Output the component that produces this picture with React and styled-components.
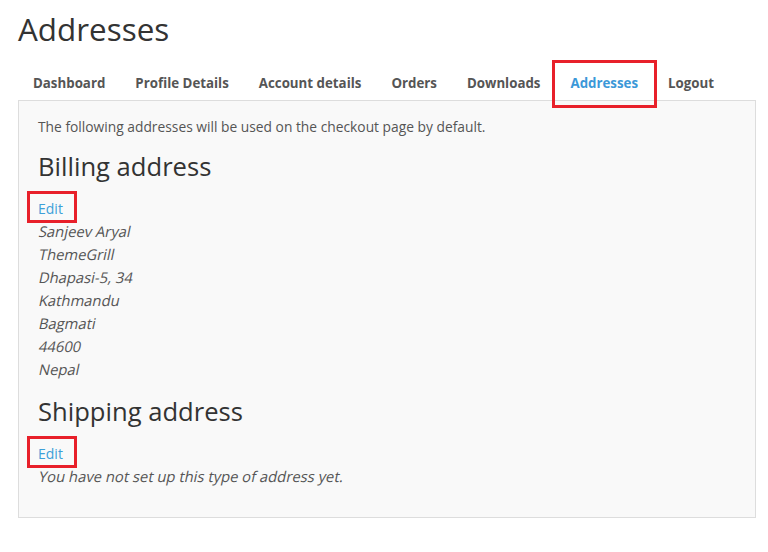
import React from 'react'
import styled, { createGlobalStyle } from 'styled-components';

const GlobalStyle = createGlobalStyle`
body{
    margin: 0;
    background: #fff;
    font-family: "Open Sans", "Liberation Sans", sans-serif;
    color: #555;
}
`;

const tabs = ['Dashboard', 'Profile Details', 'Account details', 'Orders', 'Downloads', 'Addresses', 'Logout'];
const billing = ['Sanjeev Aryal', 'ThemeGrill', 'Dhapasi-5, 34', 'Kathmandu', 'Bagmati', '44600', 'Nepal'];

const App = () => {
    return (
        <Page>
            <GlobalStyle/>
            <Title>Addresses</Title>
            <Tabs>
                {tabs.map(t => (
                    <Tab key={t} $active={t === 'Addresses'}>{t}</Tab>
                ))}
            </Tabs>
            <Panel>
                <Intro>The following addresses will be used on the checkout page by default.</Intro>
                <Heading>Billing address</Heading>
                <EditLink>Edit</EditLink>
                <Address>
                    {billing.map(line => <Line key={line}>{line}</Line>)}
                </Address>
                <Heading>Shipping address</Heading>
                <EditLink>Edit</EditLink>
                <Address>
                    <Line>You have not set up this type of address yet.</Line>
                </Address>
            </Panel>
        </Page>
    )
}

export default App;

const Page = styled.div`
width: 768px;
height: 552px;
padding: 0 12px 0 18px;
box-sizing: border-box;
`;

const Title = styled.h1`
margin: 0;
padding-top: 7px;
font-size: 31.4px;
font-weight: 400;
line-height: 44px;
color: #333;
`;

const Tabs = styled.div`
display: flex;
margin-top: 12px;
position: relative;
z-index: 1;
`;

const Tab = styled.div`
position: relative;
padding: 0 15px;
height: 42px;
line-height: 40px;
font-size: 13.3px;
font-weight: 700;
color: ${p => p.$active ? '#3b98d8' : '#555'};
margin-bottom: -5px;

&::after{
    content: "";
    display: ${p => p.$active ? 'block' : 'none'};
    position: absolute;
    top: -3px;
    bottom: -3px;
    left: -3px;
    right: -4px;
    border: 3px solid #e8202a;
}
`;

const Panel = styled.div`
border: 1px solid #ddd;
background: #f9f9f9;
padding: 14px 19px 31px;
height: 418px;
box-sizing: border-box;
`;

const Intro = styled.p`
margin: 0;
font-size: 13.8px;
line-height: 24px;
`;

const Heading = styled.h2`
margin: 0;
padding: 12px 0 11px;
font-size: 25.6px;
font-weight: 400;
line-height: 32px;
color: #333;
`;

const EditLink = styled.a`
display: inline-block;
margin: -3px 0 -3px -11px;
padding: 5px 14px 1px 11px;
font-size: 14px;
line-height: 26px;
color: #3d9fd8;
outline: 3px solid #e8202a;
outline-offset: -3px;
`;

const Address = styled.address`
display: flex;
flex-direction: column;
align-items: flex-start;
font-size: 14.8px;
line-height: 23px;
font-style: normal;
color: #555;
margin-bottom: 3px;
`;

const Line = styled.span`
display: inline-block;
transform: skewX(-12deg);
transform-origin: 0 17px;
`;
